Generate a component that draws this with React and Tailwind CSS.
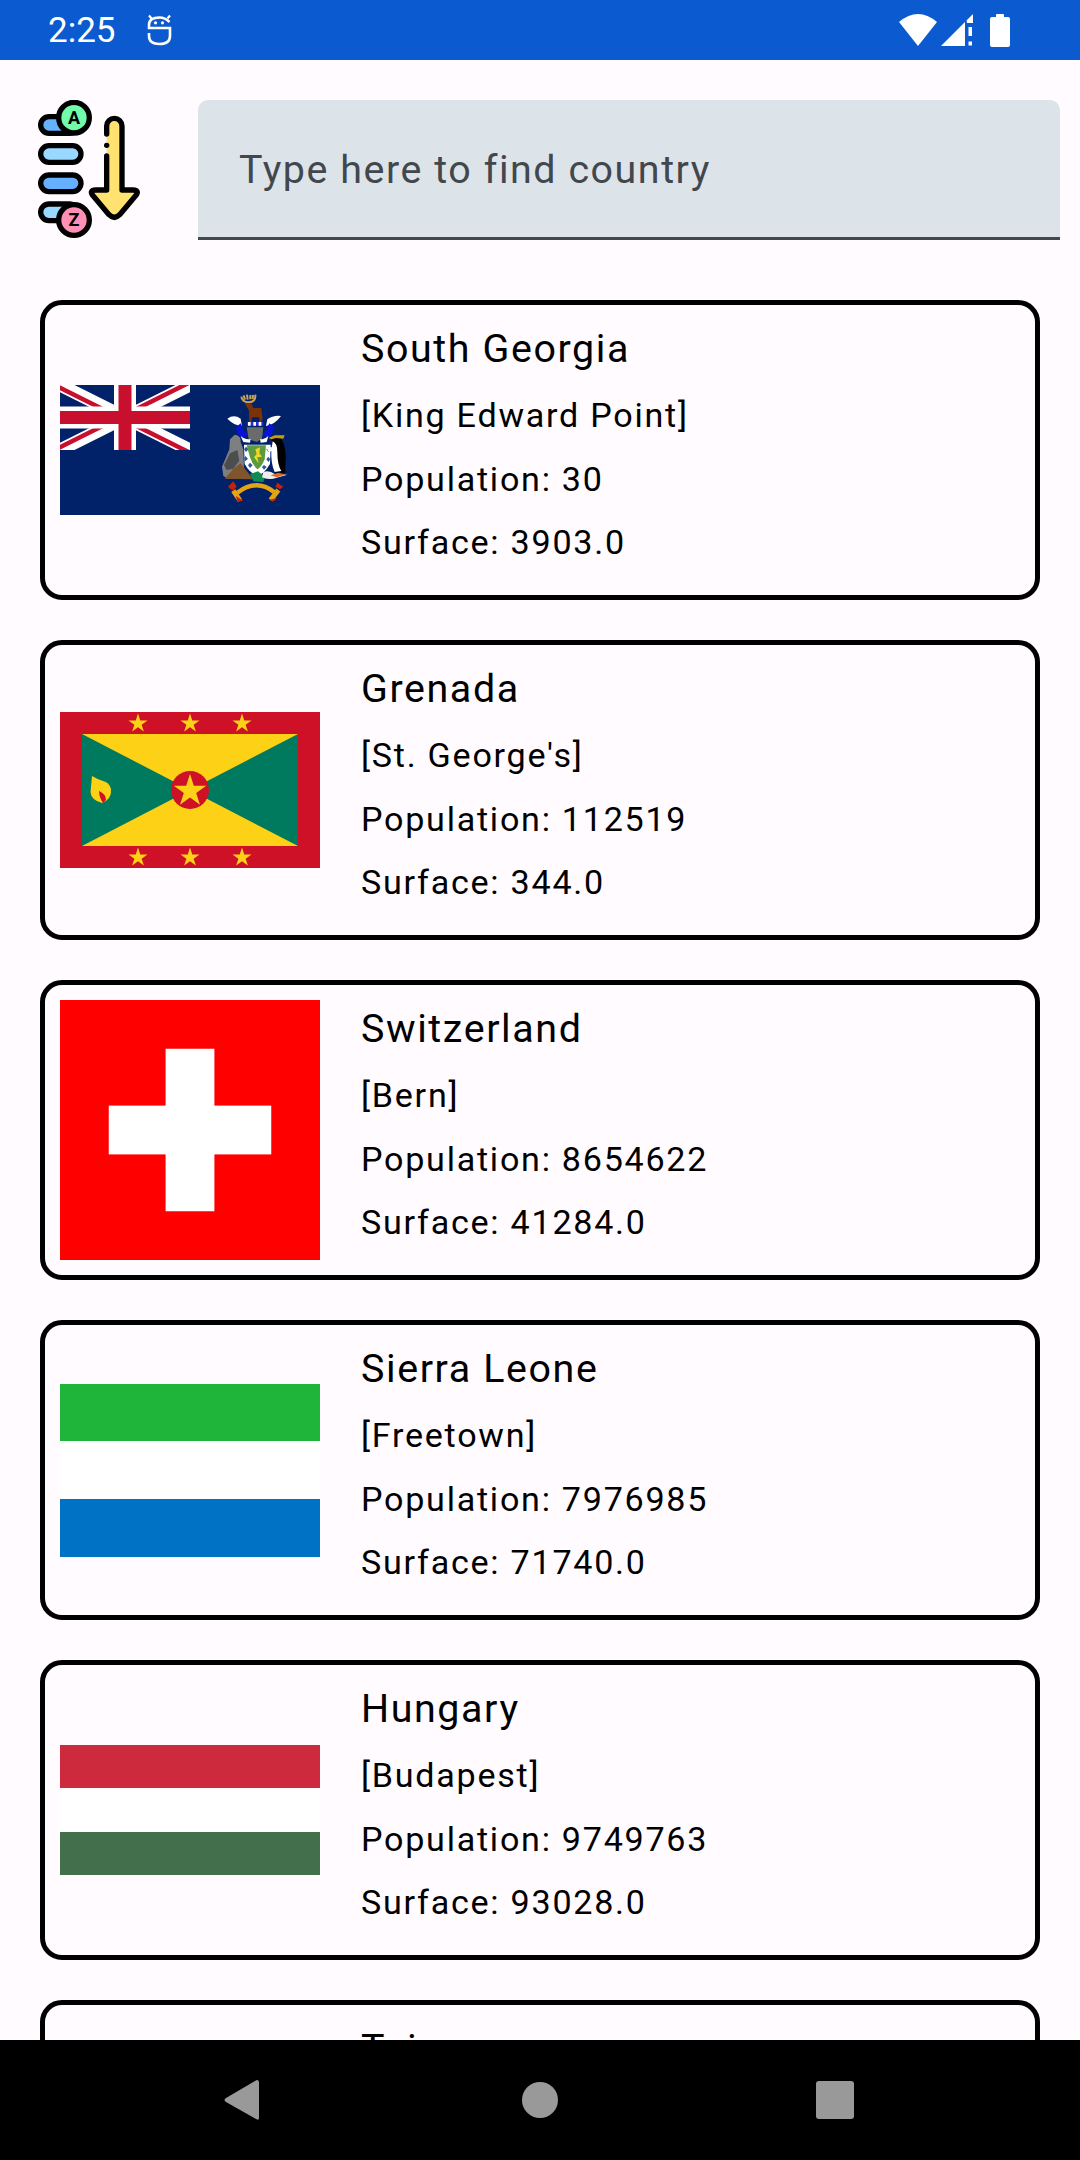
const font = { fontFamily: "Roboto, sans-serif" };

const arrowPath =
  "M321 402 V378 a23 23 0 0 1 46 0 V570 H400 Q420 571 409 586 L360 644 Q344 660 328 644 L279 586 Q268 571 288 570 H321 V468";

function SortIcon() {
  return (
    <svg width="110" height="140" viewBox="100 300 330 420" className="block shrink-0">
      <g stroke="#000" strokeWidth="16" strokeLinejoin="round" strokeLinecap="round">
        <rect x="123" y="350" width="111" height="50" rx="25" fill="#66b1ff" />
        <rect x="123" y="437" width="121" height="50" rx="25" fill="#99d9ff" />
        <rect x="123" y="525" width="121" height="50" rx="25" fill="#66b1ff" />
        <rect x="123" y="612" width="111" height="50" rx="25" fill="#99d9ff" />
        <circle cx="223" cy="353" r="46" fill="#72fbaa" />
        <circle cx="223" cy="660" r="46" fill="#ff8fb4" />
        <path d={arrowPath} fill="#ffe26f" stroke="none" />
        <path d={arrowPath} fill="none" />
      </g>
      <circle cx="321" cy="436" r="8" fill="#000" />
      <text x="223" y="372" textAnchor="middle" fontSize="54" fontWeight="700" fill="#000" style={font}>A</text>
      <text x="223" y="679" textAnchor="middle" fontSize="54" fontWeight="700" fill="#000" style={font}>Z</text>
    </svg>
  );
}

function Star({ cx, cy, r, fill = "#fcd116" }) {
  const pts = [];
  for (let i = 0; i < 10; i++) {
    const a = -Math.PI / 2 + (i * Math.PI) / 5;
    const rad = i % 2 === 0 ? r : r * 0.382;
    pts.push(`${(cx + rad * Math.cos(a)).toFixed(2)},${(cy + rad * Math.sin(a)).toFixed(2)}`);
  }
  return <polygon points={pts.join(" ")} fill={fill} />;
}

function SouthGeorgia() {
  return (
    <svg width="260" height="130" viewBox="0 0 260 130" className="block shrink-0">
      <rect width="260" height="130" fill="#012169" />
      <svg x="0" y="0" width="130" height="65" viewBox="0 0 130 65">
        <path d="M0 0 L130 65 M130 0 L0 65" stroke="#fff" strokeWidth="13" />
        <path d="M0 0 L65 32.5 M130 65 L65 32.5" stroke="#c8102e" strokeWidth="4.5" transform="translate(-1.5,2)" />
        <path d="M130 0 L65 32.5 M0 65 L65 32.5" stroke="#c8102e" strokeWidth="4.5" transform="translate(-1.5,-2)" />
        <rect x="54" width="22" height="65" fill="#fff" />
        <rect y="21.5" width="130" height="22" fill="#fff" />
        <rect x="58.5" width="13" height="65" fill="#c8102e" />
        <rect y="26" width="130" height="13" fill="#c8102e" />
      </svg>
      <g transform="translate(140,-15) scale(0.33333)">
        <path d="M124 80 Q126 96 146 97 Q168 96 166 74 M131 76 l4 13 M141 74 l2 15 M151 75 l0 13 M159 75 l-1 12" fill="none" stroke="#c9a35a" strokeWidth="6" />
        <path d="M134 100 L154 100 L160 114 L184 114 L188 146 L184 158 L178 158 L178 142 L156 142 L154 158 L148 158 L147 122 Z" fill="#7a3208" />
        <path d="M82 146 Q102 132 122 146 L126 168 Q104 168 82 146 Z" fill="#fff" />
        <path d="M243 138 Q220 135 202 148 L198 168 Q224 164 243 138 Z" fill="#fff" />
        <path d="M108 172 L122 160 L134 186 L146 192 L128 204 L112 192 Z" fill="#0a12d8" />
        <path d="M222 172 L208 160 L196 186 L184 192 L202 204 L216 192 Z" fill="#0a12d8" />
        <rect x="140" y="156" width="50" height="11" fill="#2a2fd0" />
        <path d="M144 156h8v11h-8zM160 156h8v11h-8zM176 156h8v11h-8z" fill="#fff" />
        <path d="M140 172 H190 L186 206 L170 216 L146 208 Z" fill="#6b6b6b" />
        <path d="M122 198 Q140 212 152 206 L150 218 L130 216 Z M205 198 Q190 212 180 206 L182 218 L200 216 Z" fill="#fff" />
        <path d="M132 224 H212 L210 282 Q192 312 172 318 Q148 308 134 282 Z" fill="#fff" />
        <path d="M138 230 l8 8 -8 8 -6 -8Z M136 258 l8 8 -8 8 -4 -8Z M150 278 l8 8 -8 8 -6 -8Z M192 285 l8 6 -8 8 -6 -8Z M205 260 l6 8 -6 8 -6 -8Z M205 232 l6 6 -6 8 -6 -8Z" fill="#2a5b9c" />
        <path d="M140 226 H198 L194 268 Q184 292 172 298 Q156 282 150 262 Z" fill="#5c9a3c" />
        <path d="M166 238 L180 232 L178 250 L186 260 L172 262 L176 280 L162 262 L170 252 Z" fill="#f0d628" />
        <path d="M104 194 Q124 196 122 216 L130 238 L132 292 L136 322 L84 326 L70 318 L66 290 L78 262 L88 238 L90 208 Z" fill="#7d7f80" />
        <path d="M90 250 L112 240 L118 272 L100 296 L80 300 L72 286 Z" fill="#4b4d4e" />
        <path d="M74 326 L100 296 L122 280 L150 316 L158 328 Z" fill="#80552e" />
        <path d="M150 312 L174 304 L195 320 L190 336 L160 334 Z" fill="#118a4f" />
        <path d="M214 204 Q238 194 246 210 Q262 240 256 286 L256 308 L226 308 Q218 280 220 240 Z" fill="#000" />
        <path d="M218 214 Q232 220 232 246 Q232 285 244 303 L224 306 Q212 280 214 240 Z" fill="#fff" />
        <path d="M200 232 H220 V244 H204 Z" fill="#fff" />
        <path d="M206 204 L224 196 L254 196 L250 206 L228 204 L214 208 Z" fill="#c79a10" />
        <path d="M190 306 Q208 300 224 312 L262 314 L220 326 Q200 330 186 322 Z" fill="#f1ede8" />
        <path d="M212 316 L236 308 L256 314 L230 322 Z" fill="#d96a2a" />
        <path d="M112 368 Q170 325 222 366" fill="none" stroke="#e5a412" strokeWidth="13" />
        <path d="M100 362 L120 392 M235 360 L212 390" fill="none" stroke="#e5a412" strokeWidth="15" />
        <path d="M84 350 L100 334 L110 350 L98 362 Z M108 378 L130 392 L112 396 Z M232 338 L250 350 L240 358 L226 350 Z M206 390 L232 384 L222 394 Z" fill="#c2230f" />
      </g>
    </svg>
  );
}

function Grenada() {
  return (
    <svg width="260" height="156" viewBox="0 0 260 156" className="block shrink-0">
      <rect width="260" height="156" fill="#ce1126" />
      <rect x="22" y="22" width="216" height="112" fill="#007a5e" />
      <path d="M22 22 H238 L130 78 Z M22 134 H238 L130 78 Z" fill="#fcd116" />
      <circle cx="130" cy="78" r="19" fill="#ce1126" />
      <Star cx={130} cy={79} r={17} />
      {[78, 130, 182].map((x) => (
        <g key={x}>
          <Star cx={x} cy={11.5} r={10} />
          <Star cx={x} cy={145.5} r={10} />
        </g>
      ))}
      <path d="M32 64 Q31 75 30.5 80 Q31 88 42 91 Q52 87 51 77 Q49 70 43 69 Q37 67 32 64 Z" fill="#fcd116" />
      <path d="M39 79 Q46 82 46 88 L43 91 Q39 85 39 79 Z" fill="#ce1126" />
    </svg>
  );
}

function Switzerland() {
  return (
    <svg width="260" height="260" viewBox="0 0 260 260" className="block shrink-0">
      <rect width="260" height="260" fill="#f00" />
      <rect x="105.6" y="48.75" width="48.8" height="162.5" fill="#fff" />
      <rect x="48.75" y="105.6" width="162.5" height="48.8" fill="#fff" />
    </svg>
  );
}

function SierraLeone() {
  return (
    <div className="flex h-[173px] w-[260px] shrink-0 flex-col">
      <div className="flex-1 bg-[#1eb53a]" />
      <div className="flex-1 bg-white" />
      <div className="flex-1 bg-[#0072c6]" />
    </div>
  );
}

function Hungary() {
  return (
    <div className="flex h-[130px] w-[260px] shrink-0 flex-col">
      <div className="flex-1 bg-[#cd2a3e]" />
      <div className="flex-1 bg-white" />
      <div className="flex-1 bg-[#436f4d]" />
    </div>
  );
}

function Taiwan() {
  return <div className="h-[173px] w-[260px] shrink-0 bg-[#fe0000]" />;
}

const countries = [
  { name: "South Georgia", capital: "King Edward Point", pop: "30", surface: "3903.0", flag: <SouthGeorgia /> },
  { name: "Grenada", capital: "St. George's", pop: "112519", surface: "344.0", flag: <Grenada /> },
  { name: "Switzerland", capital: "Bern", pop: "8654622", surface: "41284.0", flag: <Switzerland /> },
  { name: "Sierra Leone", capital: "Freetown", pop: "7976985", surface: "71740.0", flag: <SierraLeone /> },
  { name: "Hungary", capital: "Budapest", pop: "9749763", surface: "93028.0", flag: <Hungary /> },
  { name: "Taiwan", capital: "Taipei", pop: "23503349", surface: "36193.0", flag: <Taiwan /> },
];

function Card({ c }) {
  return (
    <div className="flex h-[300px] shrink-0 items-center rounded-[22px] border-[5px] border-black px-[15px]">
      <div className="flex w-[260px] shrink-0 justify-center">{c.flag}</div>
      <div className="mt-[12px] ml-[41px] flex flex-col self-start text-black">
        <div className="h-[66px] text-[39.4px] leading-[64px] tracking-[1.6px]">{c.name}</div>
        <div className="h-[64px] text-[34.1px] leading-[64px] tracking-[1.75px]">[{c.capital}]</div>
        <div className="h-[62.5px] text-[34.1px] leading-[64px] tracking-[1.75px]">Population: {c.pop}</div>
        <div className="h-[64px] text-[34.1px] leading-[64px] tracking-[1.75px]">Surface: {c.surface}</div>
      </div>
    </div>
  );
}

export default function App() {
  return (
    <div className="flex h-[2160px] w-[1080px] flex-col overflow-hidden bg-[#fffbff] font-['Roboto',sans-serif]">
      <div className="flex h-[60px] shrink-0 items-center justify-between bg-[#0b5acf] pl-[48px] pr-[70px] text-white">
        <div className="flex items-center">
          <span className="text-[35px] leading-none">2:25</span>
          <svg width="25" height="32" viewBox="0 0 25 32" className="ml-[31px]" fill="none">
            <path d="M2 1.5 L4.5 4.5 M23 1.5 L20.5 4.5" stroke="#fff" strokeWidth="2.2" />
            <path d="M22.5 8 Q18 3.5 12.5 3.5 Q2 3.5 2 11 V14 H23 V22 Q23 30 12.5 30 Q2 30 2 22 V19" stroke="#fff" strokeWidth="2.6" />
            <circle cx="8.5" cy="8.8" r="1.6" fill="#fff" />
            <circle cx="15.5" cy="8.8" r="1.6" fill="#fff" />
          </svg>
        </div>
        <div className="flex items-center">
          <svg width="38" height="32" viewBox="0 0 38 32">
            <path d="M0 8 Q19 -8 38 8 L19 32 Z" fill="#fff" />
          </svg>
          <svg width="32" height="32" viewBox="0 0 32 32" className="ml-[4px]">
            <path d="M0 32 L24 8 V32 Z" fill="#fff" />
            <path d="M25.5 6.5 L32 0 V9 H26 Z" fill="#fff" />
            <rect x="27.5" y="13" width="3.5" height="9" fill="#fff" />
            <rect x="27.5" y="27.5" width="3.5" height="4" fill="#fff" />
          </svg>
          <svg width="20" height="33" viewBox="0 0 20 33" className="ml-[17px]">
            <path d="M6 3 V1 Q6 0 7 0 H13 Q14 0 14 1 V3 H18 Q20 3 20 5 V31 Q20 33 18 33 H2 Q0 33 0 31 V5 Q0 3 2 3 Z" fill="#fff" />
          </svg>
        </div>
      </div>

      <div className="flex shrink-0 items-start pt-[40px] pr-[20px]">
        <div className="ml-[33px] w-[165px]">
          <SortIcon />
        </div>
        <div className="flex h-[140px] flex-1 items-center rounded-t-[10px] border-b-[3px] border-[#44474e] bg-[#dce3e9] pt-[3px] pl-[41px]">
          <span className="text-[39.4px] tracking-[1.55px] text-[#42474e]">Type here to find country</span>
        </div>
      </div>

      <div className="mt-[60px] flex min-h-0 flex-1 flex-col gap-[40px] overflow-hidden px-[40px]">
        {countries.map((c) => (
          <Card key={c.name} c={c} />
        ))}
      </div>

      <div className="flex h-[120px] shrink-0 items-center bg-black">
        <svg width="1080" height="120" viewBox="0 0 1080 120">
          <path d="M257 40 Q259 40 259 43 V78 Q259 81 256 79 L226 62 Q223 60 226 58 L255 41 Z" fill="#999" />
          <circle cx="540" cy="60" r="18" fill="#999" />
          <rect x="816" y="41" width="38" height="38" rx="3" fill="#999" />
        </svg>
      </div>
    </div>
  );
}
